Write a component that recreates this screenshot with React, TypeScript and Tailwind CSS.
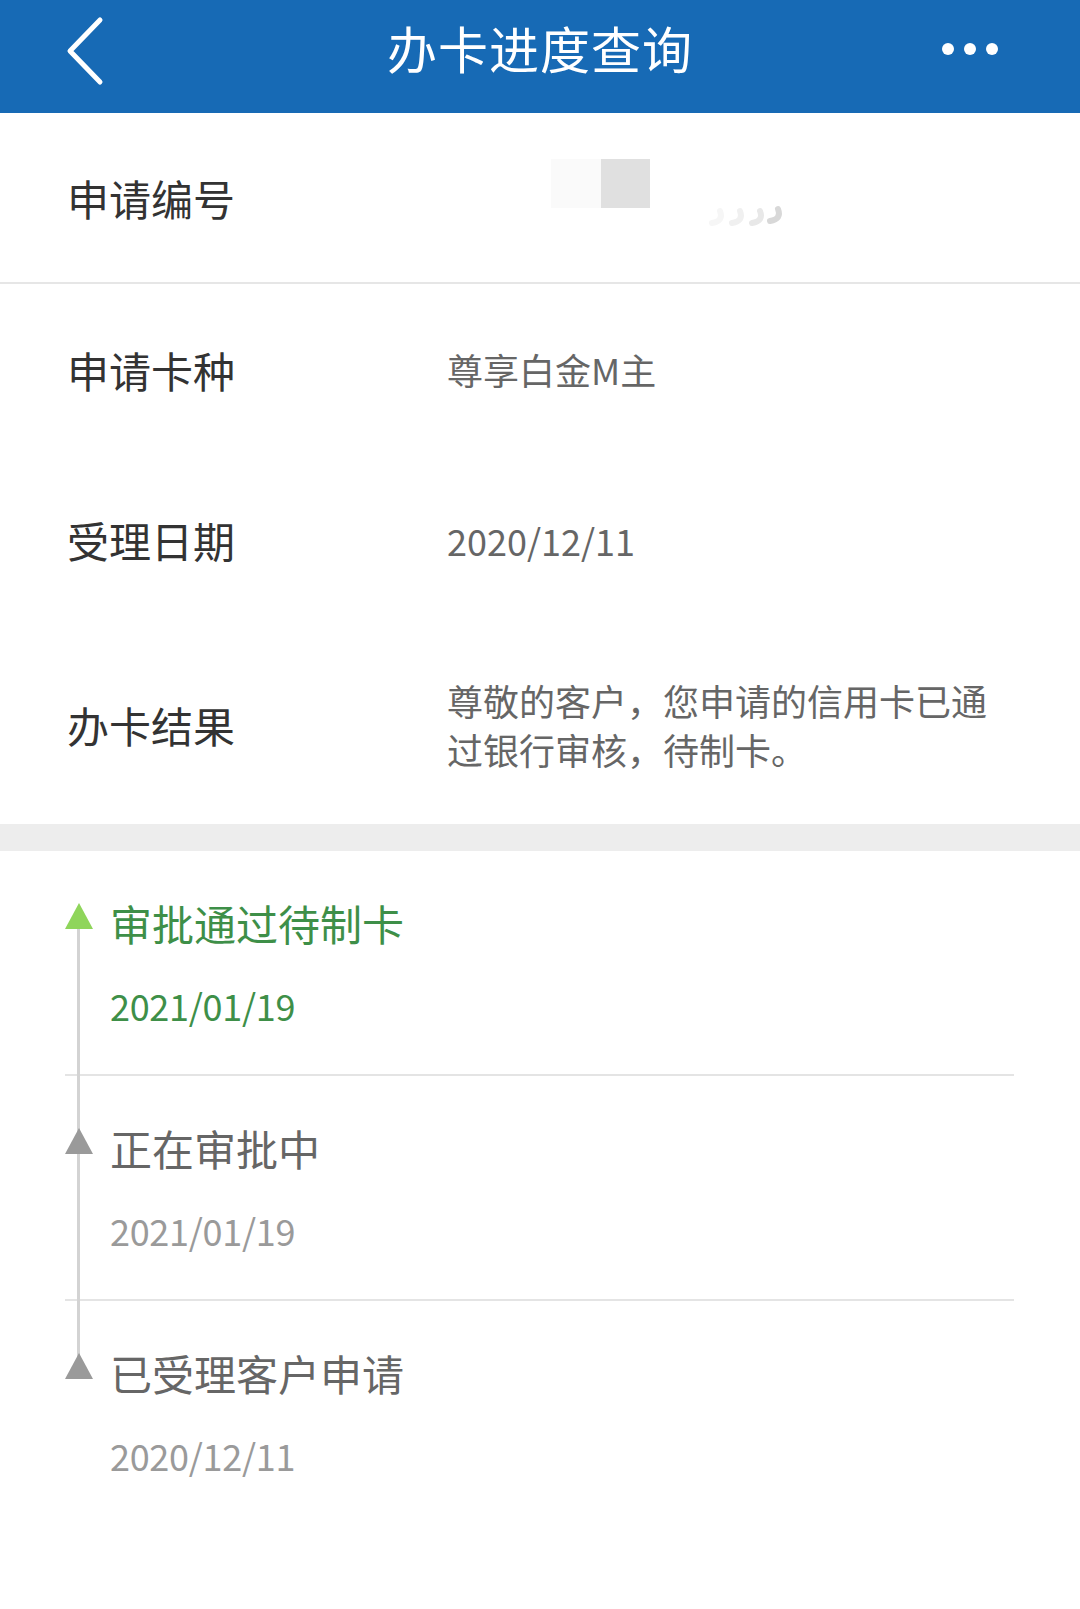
const font = { fontFamily: '"Noto Sans CJK SC", "Noto Sans", sans-serif' };

type Step = { title: string; date: string; active?: boolean };

const steps: Step[] = [
  { title: '审批通过待制卡', date: '2021/01/19', active: true },
  { title: '正在审批中', date: '2021/01/19' },
  { title: '已受理客户申请', date: '2020/12/11' },
];

const InfoRow = ({ label, children, h }: { label: string; children: React.ReactNode; h: string }) => (
  <div className={`flex items-center ${h}`}>
    <div className="w-[447px] shrink-0 pl-[67px] text-[42px] leading-[50px] text-[#333]">{label}</div>
    <div className="flex-1 pr-[80px] text-[36px] leading-[49px] text-[#666]">{children}</div>
  </div>
);

const TimelineItem = ({ step, index }: { step: Step; index: number }) => {
  const last = index === steps.length - 1;
  return (
    <div className={`relative pl-[45px] ${last ? 'pt-[50px]' : 'pt-[50px] pb-[49px] border-b-2 border-[#e4e4e4]'}`}>
      {/* line to the next step */}
      {!last && <div className="absolute left-[12px] top-[77px] h-[225px] w-[3px] bg-[#d3d3d3]" />}
      <div
        className={`absolute left-0 top-[52px] h-[26px] w-[28px] ${step.active ? 'bg-[#8fd55b]' : 'bg-[#9a9a9a]'}`}
        style={{ clipPath: 'polygon(50% 0, 100% 100%, 0 100%)' }}
      />
      <div className={`text-[42px] leading-[44px] ${step.active ? 'text-[#3e8f48]' : 'text-[#666]'}`}>{step.title}</div>
      <div className={`mt-[40px] text-[36px] leading-[40px] tracking-[-0.3px] ${step.active ? 'text-[#3e8f48]' : 'text-[#9a9a9a]'}`}>{step.date}</div>
    </div>
  );
};

export default function App() {
  return (
    <div className="w-[1080px] h-[1609px] bg-white" style={font}>
      <div className="relative flex items-center justify-center h-[113px] bg-[#176ab5]">
        <button className="absolute left-[62px] top-[16px]">
          <svg width="46" height="70" viewBox="0 0 46 70">
            <path d="M38 4 L8 35 L38 66" stroke="white" strokeWidth="5" fill="none" strokeLinecap="round" strokeLinejoin="round" />
          </svg>
        </button>
        <span className="text-[50px] leading-[60px] text-white tracking-[1px] -mt-[20px]">办卡进度查询</span>
        <div className="absolute right-[82px] top-[43px] flex gap-[10px]">
          <span className="size-[12px] rounded-full bg-white" />
          <span className="size-[12px] rounded-full bg-white" />
          <span className="size-[12px] rounded-full bg-white" />
        </div>
      </div>

      <div className="flex h-[171px] border-b-2 border-[#e6e6e6]">
        <div className="w-[551px] shrink-0 pl-[67px] pt-[60px] text-[42px] leading-[50px] text-[#333]">申请编号</div>
        <div className="flex items-end pt-[46px] h-[120px]">
          <div className="flex self-start">
            <div className="w-[50px] h-[49px] bg-[#fafafa]" />
            <div className="w-[49px] h-[49px] bg-[#e0e0e0]" />
          </div>
          <svg width="90" height="30" viewBox="0 0 90 30" className="ml-[50px] mb-[2px]">
            <path d="M20 10 q4 10 -8 12" stroke="#f6f6f6" strokeWidth="6" fill="none" strokeLinecap="round" />
            <path d="M40 10 q4 10 -8 12" stroke="#f0f0f0" strokeWidth="6" fill="none" strokeLinecap="round" />
            <path d="M60 10 q4 10 -8 12" stroke="#e8e8e8" strokeWidth="6" fill="none" strokeLinecap="round" />
            <path d="M78 8 q4 10 -8 12" stroke="#d8d8d8" strokeWidth="6" fill="none" strokeLinecap="round" />
          </svg>
        </div>
      </div>

      <InfoRow label="申请卡种" h="h-[171px]">尊享白金M主</InfoRow>
      <InfoRow label="受理日期" h="h-[170px]">2020/12/11</InfoRow>
      <InfoRow label="办卡结果" h="h-[199px]">
        尊敬的客户，您申请的信用卡已通过银行审核，待制卡。
      </InfoRow>

      <div className="h-[27px] bg-[#ededed]" />

      <div className="ml-[65px] mr-[66px]">
        {steps.map((s, i) => (
          <TimelineItem key={i} step={s} index={i} />
        ))}
      </div>
    </div>
  );
}
